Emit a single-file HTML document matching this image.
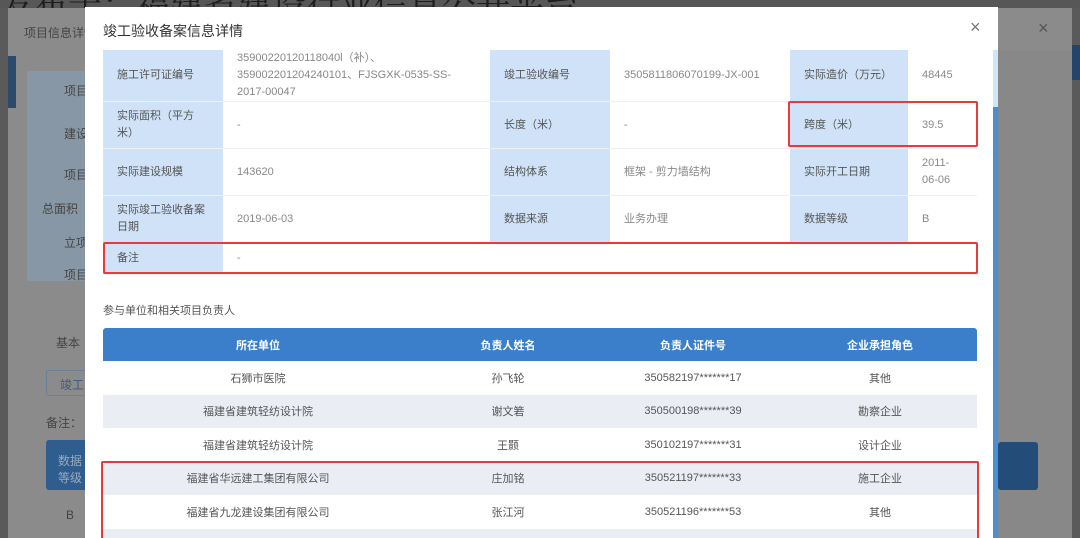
<!DOCTYPE html>
<html style="overflow:hidden;width:1080px;height:538px"><head><meta charset="utf-8"><style>
*{margin:0;padding:0;box-sizing:border-box}
html,body{overflow:hidden}
body{width:1080px;height:538px;position:relative;background:#5a5a5a;font-family:"Liberation Sans","Noto Sans CJK SC",sans-serif;font-size:11px;color:#666}
.abs{position:absolute}
.top{left:0;top:0;width:1080px;height:8px;background:#575757;overflow:hidden;z-index:0}
.top span{position:absolute;left:0;top:-22px;font-size:34px;color:#1e1e1e;white-space:nowrap;font-family:"Noto Serif CJK SC",serif}
.outer{left:8px;top:8px;width:1064px;height:530px;background:#8b8b8b;overflow:hidden;z-index:1}
.lab{color:#444;font-size:12px}
.modal{left:85px;top:7px;width:913px;height:531px;background:#fff;overflow:hidden;z-index:2}
table{border-collapse:collapse}
.info td{border-bottom:1px solid #eef0f3;padding:0 14px;line-height:17px;vertical-align:middle}
.info td.l{background:#cfe2f8;color:#555}
.info td.v{color:#888}
.red{position:absolute;border:2px solid #e83a3a;border-radius:2px}
.pt th{background:#3b7fcb;color:#fff;font-weight:bold;height:33px;font-size:11px}
.pt td{height:33.5px;text-align:center;color:#555}
.pt tr:nth-child(odd) td{background:#ebedf4}
</style></head><body>
<div class="abs top"><span>发布于：福建省建设行业信息公开平台</span></div>
<div class="abs outer">
 <div class="abs lab" style="left:16px;top:16px;font-size:12px">项目信息详情</div>
 <div class="abs" style="left:1030px;top:10px;font-size:18px;color:#555">×</div>
 <div class="abs" style="left:0;top:48px;width:8px;height:52px;background:#2d4a6a"></div>
 <div class="abs" style="left:19px;top:63px;width:70px;height:210px;background:#8897a5"></div>
 <div class="abs lab" style="left:56px;top:74px">项目</div>
 <div class="abs lab" style="left:56px;top:117px">建设</div>
 <div class="abs lab" style="left:56px;top:158px">项目</div>
 <div class="abs lab" style="left:34px;top:192px">总面积（</div>
 <div class="abs lab" style="left:56px;top:226px">立项</div>
 <div class="abs lab" style="left:56px;top:258px">项目</div>
 <div class="abs lab" style="left:48px;top:326px">基本</div>
 <div class="abs" style="left:38px;top:362px;width:50px;height:26px;border:1px solid #6b7f99;border-radius:3px"></div>
 <div class="abs lab" style="left:52px;top:368px;color:#3d5a80">竣工</div>
 <div class="abs lab" style="left:38px;top:406px">备注：</div>
 <div class="abs" style="left:38px;top:432px;width:50px;height:50px;background:#2e5d8e;border-radius:3px"></div>
 <div class="abs lab" style="left:50px;top:444px;color:#9ab">数据<br>等级</div>
 <div class="abs lab" style="left:58px;top:500px">B</div>
 <div class="abs" style="left:990px;top:43px;width:74px;height:487px;background:#888"></div>
 <div class="abs" style="left:990px;top:434px;width:40px;height:48px;background:#234d78;border-radius:3px"></div>
</div>
<div class="abs" style="left:1072px;top:45px;width:8px;height:35px;background:#23446b;z-index:1"></div>
<div class="abs modal">
 <div class="abs" style="left:18px;top:14px;font-size:14px;color:#333">竣工验收备案信息详情</div>
 <div class="abs" style="left:885px;top:10px;font-size:18px;color:#777">×</div>
 <div class="abs" style="left:908px;top:43px;width:5px;height:488px;background:#cfe6f8"></div>
 <div class="abs" style="left:908px;top:100px;width:5px;height:431px;background:#4a8fd6"></div>
 <table class="abs info" style="left:18px;top:43px;width:874px">
  <tr style="height:51px"><td class="l" style="width:120px">施工许可证编号</td><td class="v" style="width:267px">35900220120118040l（补）、359002201204240101、FJSGXK-0535-SS-2017-00047</td><td class="l" style="width:120px">竣工验收编号</td><td class="v" style="width:180px">3505811806070199-JX-001</td><td class="l" style="width:118px">实际造价（万元）</td><td class="v">48445</td></tr>
  <tr style="height:47px"><td class="l">实际面积（平方米）</td><td class="v">-</td><td class="l">长度（米）</td><td class="v">-</td><td class="l">跨度（米）</td><td class="v">39.5</td></tr>
  <tr style="height:47px"><td class="l">实际建设规模</td><td class="v">143620</td><td class="l">结构体系</td><td class="v">框架 - 剪力墙结构</td><td class="l">实际开工日期</td><td class="v">2011-06-06</td></tr>
  <tr style="height:47px"><td class="l">实际竣工验收备案日期</td><td class="v">2019-06-03</td><td class="l">数据来源</td><td class="v">业务办理</td><td class="l">数据等级</td><td class="v">B</td></tr>
  <tr style="height:32px"><td class="l">备注</td><td class="v" colspan="5">-</td></tr>
 </table>
 <div class="abs" style="left:18px;top:295px;font-size:11px;color:#555">参与单位和相关项目负责人</div>
 <table class="abs pt" style="left:18px;top:321px;width:874px">
  <tr><th style="width:310px;border-radius:3px 0 0 0">所在单位</th><th style="width:190px">负责人姓名</th><th style="width:180px">负责人证件号</th><th style="border-radius:0 3px 0 0">企业承担角色</th></tr>
  <tr><td style="background:#fff">石狮市医院</td><td style="background:#fff">孙飞轮</td><td style="background:#fff">350582197*******17</td><td style="background:#fff">其他</td></tr>
  <tr><td>福建省建筑轻纺设计院</td><td>谢文箬</td><td>350500198*******39</td><td>勘察企业</td></tr>
  <tr><td style="background:#fff">福建省建筑轻纺设计院</td><td style="background:#fff">王颢</td><td style="background:#fff">350102197*******31</td><td style="background:#fff">设计企业</td></tr>
  <tr><td>福建省华远建工集团有限公司</td><td>庄加铭</td><td>350521197*******33</td><td>施工企业</td></tr>
  <tr><td style="background:#fff">福建省九龙建设集团有限公司</td><td style="background:#fff">张江河</td><td style="background:#fff">350521196*******53</td><td style="background:#fff">其他</td></tr>
  <tr><td>&nbsp;</td><td></td><td></td><td></td></tr>
 </table>
 <div class="red" style="left:703px;top:94px;width:190px;height:46px"></div>
 <div class="red" style="left:18px;top:235px;width:875px;height:32px"></div>
 <div class="red" style="left:16px;top:454px;width:878px;height:90px"></div>
</div>
</body></html>
